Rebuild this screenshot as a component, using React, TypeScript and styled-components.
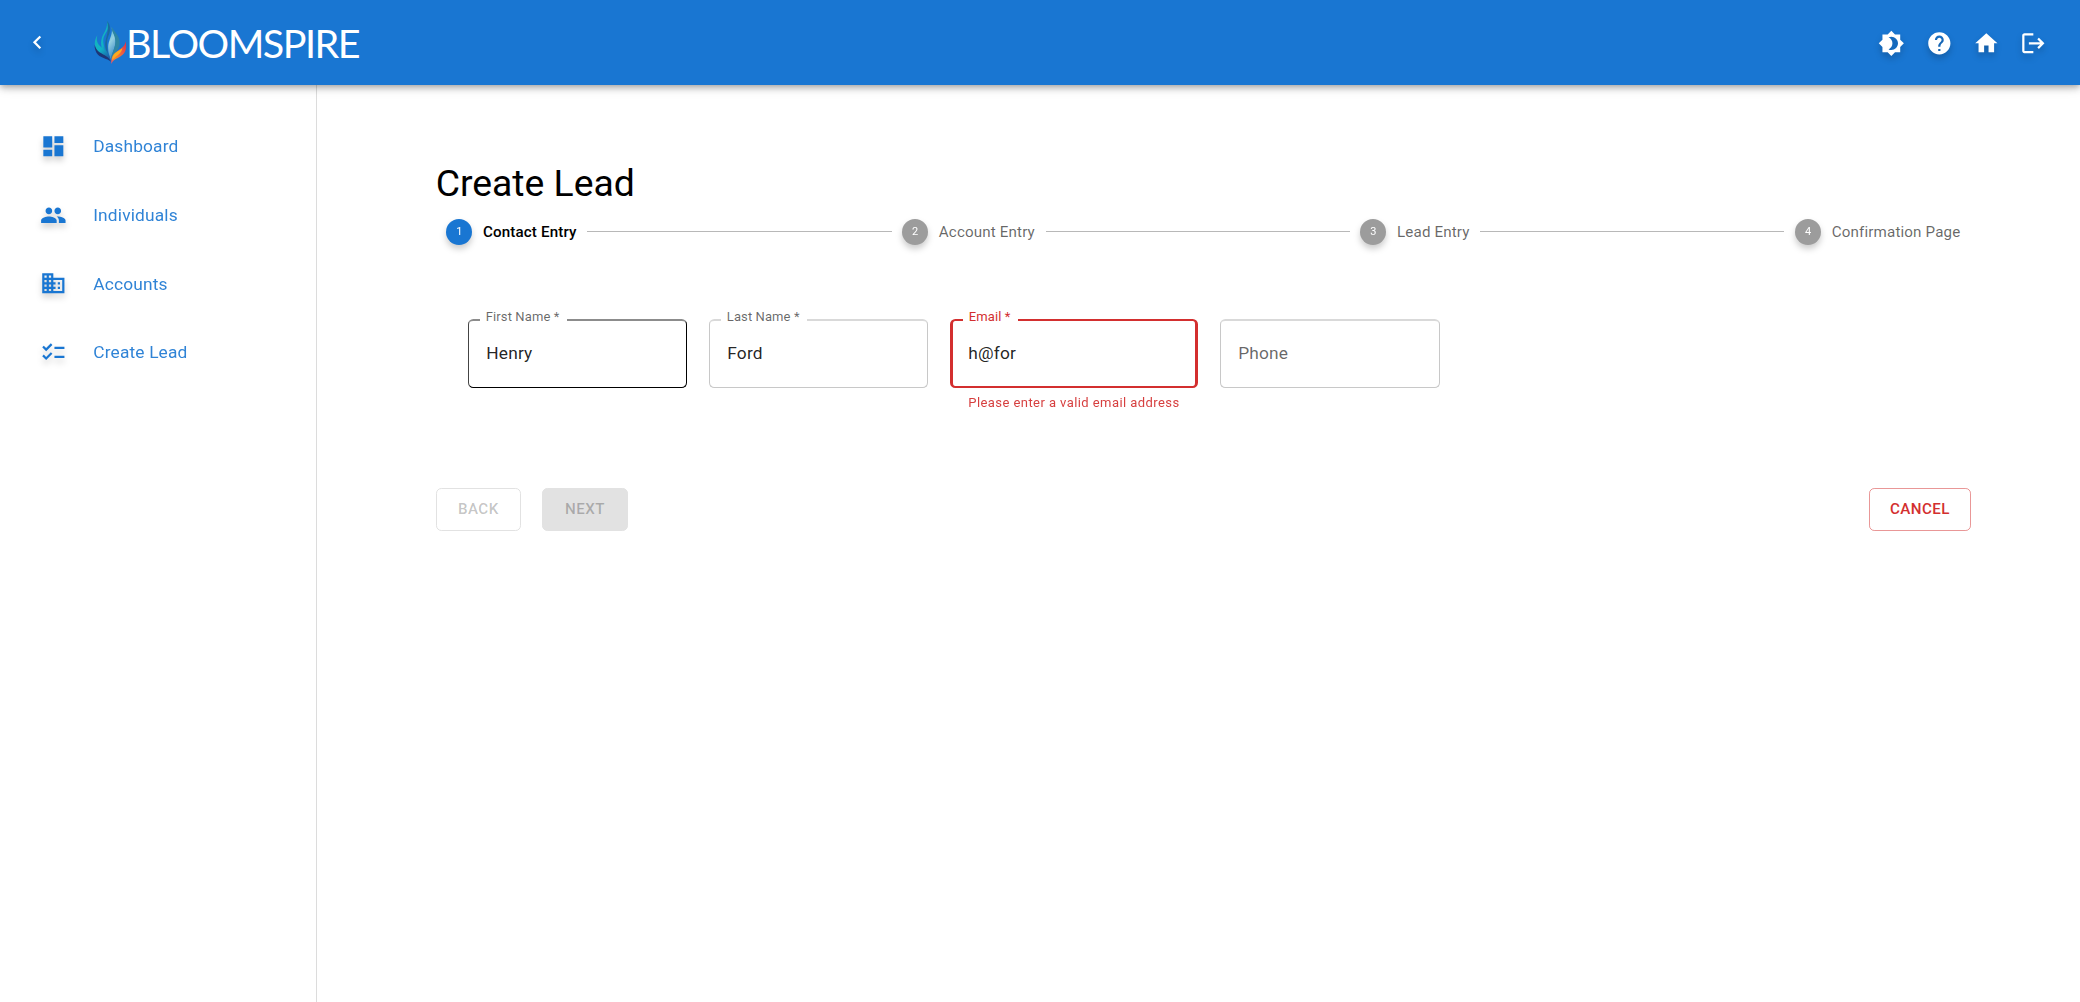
import React from "react";
import styled, { createGlobalStyle } from "styled-components";
import {
  MdBrightness4,
  MdChecklist,
  MdChevronLeft,
  MdDashboard,
  MdDomain,
  MdHelp,
  MdHome,
  MdLogout,
  MdPeople,
} from "react-icons/md";

const blue = "#1976d2";
const red = "#d32f2f";

const GlobalStyle = createGlobalStyle`
  *, *::before, *::after { box-sizing: border-box; }
  body {
    margin: 0;
    background: #fff;
    color: rgba(0, 0, 0, 0.87);
    font-family: Roboto, "Liberation Sans", sans-serif;
    font-size: 17.33px;
  }
`;

const Page = styled.div`
  display: flex;
  flex-direction: column;
  height: 1002px;
  overflow: hidden;
`;

const Header = styled.header`
  position: relative;
  z-index: 2;
  flex: none;
  display: flex;
  align-items: center;
  height: 85px;
  padding: 0 33.2px 0 23.5px;
  background: ${blue};
  color: #fff;
  box-shadow: 0 2.67px 5.33px -1.33px rgba(0, 0, 0, 0.2),
    0 5.33px 6.67px 0 rgba(0, 0, 0, 0.14), 0 1.33px 13.33px 0 rgba(0, 0, 0, 0.12);
`;

const Glyph = styled.span`
  display: flex;
  flex: none;
  font-size: 26.67px;
  filter: drop-shadow(0 4px 3px rgba(0, 0, 0, 0.2));
`;

const Brand = styled.div`
  display: flex;
  align-items: center;
  margin-left: 43.5px;
`;

const Flame = styled.svg`
  display: block;
  width: 33.3px;
  height: 43.3px;
`;

const Wordmark = styled.span`
  font-family: Lato, sans-serif;
  font-size: 39.5px;
  line-height: 44px;
  letter-spacing: -1.5px;
  margin: 0 0 0 -1px;
`;

const Actions = styled.div`
  display: flex;
  gap: 20.6px;
  margin: 1px 0 0 auto;
`;

const Body = styled.div`
  flex: 1;
  display: flex;
`;

const Sidebar = styled.nav`
  flex: none;
  display: flex;
  flex-direction: column;
  width: 317px;
  padding-top: 27px;
  border-right: 1px solid #dcdcdc;
`;

const NavItem = styled.a`
  display: flex;
  align-items: center;
  gap: 27px;
  height: 68.67px;
  padding-left: 39.6px;
  color: ${blue};
  letter-spacing: 0.16px;
`;

const NavLabel = styled.span`
  opacity: 0.9;
`;

const Main = styled.main`
  flex: 1;
  padding: 72px 109px 0 118.67px;
`;

const Title = styled.h1`
  margin: 0;
  color: #000;
  font-size: 37.33px;
  font-weight: 400;
  line-height: 52px;
  letter-spacing: 0;
`;

const Stepper = styled.div`
  display: flex;
  align-items: center;
  gap: 10.67px;
  height: 27px;
  margin-top: 9px;
  padding: 0 10.67px;
`;

const Step = styled.div<{ $active?: boolean }>`
  display: flex;
  align-items: center;
  gap: 10.67px;
  color: ${(p) => (p.$active ? "#000" : "rgba(0, 0, 0, 0.6)")};
  font-size: 15.17px;
  font-weight: ${(p) => (p.$active ? 500 : 400)};
  letter-spacing: 0.14px;
  white-space: nowrap;
`;

const StepNumber = styled.span<{ $active?: boolean }>`
  display: flex;
  align-items: center;
  justify-content: center;
  width: 26px;
  height: 26px;
  border-radius: 50%;
  background: ${(p) => (p.$active ? blue : "#9c9c9c")};
  color: #fff;
  font-size: 11px;
  font-weight: 400;
  letter-spacing: 0;
  filter: drop-shadow(0 4px 3px rgba(0, 0, 0, 0.2));
`;

const Connector = styled.span`
  flex: 1;
  height: 1px;
  background: #b8b8b8;
`;

const Fields = styled.div`
  display: flex;
  align-items: flex-start;
  gap: 21.33px;
  margin: 74px 0 0 32px;
  height: 169px;
`;

const Field = styled.div<{ $width: number }>`
  width: ${(p) => p.$width}px;
`;

type Tone = "normal" | "hover" | "error";
const borders: Record<Tone, string> = {
  normal: "border-width: 2px 1px 1px; border-color: #d9d9d9 #c8c8c8 #c8c8c8;",
  hover: "border-width: 2px 1px 1px; border-color: #8c8c8c #000 #000 #444;",
  error: `border-width: 2px 3px; border-color: ${red};`,
};

const Outline = styled.fieldset<{ $tone: Tone; $labelled: boolean }>`
  display: flex;
  align-items: center;
  min-width: 0;
  height: ${(p) => (p.$labelled ? 76 : 69)}px;
  margin: ${(p) => (p.$labelled ? -7 : 0)}px 0 0;
  padding: 0 ${(p) => (p.$tone === "error" ? 15.67 : 17.67)}px;
  border-style: solid;
  ${(p) => borders[p.$tone]}
  border-radius: 5.33px;
`;

const Legend = styled.legend<{ $error: boolean; $width: number }>`
  width: ${(p) => p.$width}px;
  height: 16px;
  margin-left: ${(p) => (p.$error ? -5.7 : -6.7)}px;
  padding-left: 6.2px;
  color: ${(p) => (p.$error ? red : "rgba(0, 0, 0, 0.6)")};
  font-size: 13px;
  line-height: 9px;
  letter-spacing: 0.1px;
  white-space: nowrap;
`;

const Value = styled.span<{ $placeholder?: boolean; $lift: number }>`
  margin-top: ${(p) => -p.$lift}px;
  color: ${(p) => (p.$placeholder ? "rgba(0, 0, 0, 0.6)" : "rgba(0, 0, 0, 0.87)")};
  letter-spacing: 0.16px;
  line-height: 25px;
`;

const Helper = styled.p`
  margin: 4px 18.67px 0;
  color: ${red};
  opacity: 0.92;
  font-size: 13px;
  line-height: 21px;
  letter-spacing: 0.43px;
  white-space: nowrap;
`;

const ButtonRow = styled.div`
  display: flex;
  gap: 21.33px;
`;

const buttonLooks = {
  outlined: `border-color: #e2e2e2; color: rgba(0, 0, 0, 0.24);`,
  filled: `border-color: #e2e2e2; background: #e2e2e2; color: rgba(0, 0, 0, 0.25);`,
  danger: `border-color: rgba(211, 47, 47, 0.5); color: ${red}; margin-left: auto;`,
};

const Button = styled.button<{ $look: keyof typeof buttonLooks; $width: number }>`
  width: ${(p) => p.$width}px;
  height: 42.67px;
  padding: 0;
  border: 1px solid;
  border-radius: 5.33px;
  background: none;
  font: 500 15.17px Roboto, sans-serif;
  letter-spacing: 0.43px;
  ${(p) => buttonLooks[p.$look]}
`;

const Logo = () => (
  <Flame viewBox="24 17 100 130" aria-hidden="true">
    <defs>
      <linearGradient id="teal" x1="0" y1="0" x2="0.5" y2="1">
        <stop offset="0" stopColor="#16b3b8" />
        <stop offset="0.6" stopColor="#10b2c6" />
        <stop offset="1" stopColor="#1a66ac" />
      </linearGradient>
      <linearGradient id="sky" x1="0" y1="0" x2="0.3" y2="1">
        <stop offset="0" stopColor="#4fb3cb" />
        <stop offset="0.5" stopColor="#93cfe2" />
        <stop offset="1" stopColor="#3f8fc8" />
      </linearGradient>
      <linearGradient id="ember" x1="1" y1="0" x2="0" y2="1">
        <stop offset="0" stopColor="#d92a4e" />
        <stop offset="0.4" stopColor="#ee5f40" />
        <stop offset="0.75" stopColor="#f58a2a" />
        <stop offset="1" stopColor="#e0457a" />
      </linearGradient>
    </defs>
    <path d="M63 16c9 21 0 31-7 43-8 14-6 35 16 71C50 110 41 92 47 70c4-18 19-28 16-54z" fill="url(#teal)" />
    <path d="M63 16c12 14 11 30 5 44-7 16-7 40 3 70-12-24-17-40-11-60 5-17 8-34 3-54z" fill="#1b6a9f" />
    <path d="M77 34c-2 12 12 22 12 42 0 20-9 30-15 56-9-24-9-42-4-56 5-14 10-26 7-42z" fill="url(#sky)" />
    <path d="M77 34c6 14 27 28 24 52-2 18-16 28-27 46 6-22 14-34 14-54 0-18-11-28-11-44z" fill="#2e86a3" />
    <path d="M34 60c-5 20 3 29 16 39 14 10 22 19 24 37-10-12-28-14-38-26-13-16-12-34-2-50z" fill="url(#teal)" />
    <path d="M26 88c5 19 17 24 29 31 10 6 16 10 20 20-14-11-28-10-39-21-7-7-11-20-10-30z" fill="#1d3577" />
    <path d="M119 78c5 24-2 38-17 46-11 7-20 8-26 22-2-18 4-28 15-36 14-11 26-15 28-32z" fill="url(#ember)" />
    <path d="M109 98c-2 17-15 20-31 37 1-14 8-22 17-27 6-4 10-6 14-10z" fill="#fbac1e" />
  </Flame>
);

const nav = [
  { label: "Dashboard", Icon: MdDashboard },
  { label: "Individuals", Icon: MdPeople },
  { label: "Accounts", Icon: MdDomain },
  { label: "Create Lead", Icon: MdChecklist },
];

const actions = [MdBrightness4, MdHelp, MdHome, MdLogout];
const steps = ["Contact Entry", "Account Entry", "Lead Entry", "Confirmation Page"];

type FieldData = {
  width: number;
  tone: Tone;
  label?: string;
  legend?: number;
  value: string;
  helper?: string;
};

const fields: FieldData[] = [
  { width: 219.67, tone: "hover", label: "First Name *", legend: 87.5, value: "Henry" },
  { width: 219.67, tone: "normal", label: "Last Name *", legend: 86, value: "Ford" },
  { width: 248.67, tone: "error", label: "Email *", legend: 55, value: "h@for", helper: "Please enter a valid email address" },
  { width: 220, tone: "normal", value: "Phone" },
];

export default function App() {
  return (
    <Page>
      <GlobalStyle />
      <Header>
        <Glyph><MdChevronLeft /></Glyph>
        <Brand>
          <Logo />
          <Wordmark>BLOOMSPIRE</Wordmark>
        </Brand>
        <Actions>
          {actions.map((Icon, i) => (
            <Glyph key={i}><Icon /></Glyph>
          ))}
        </Actions>
      </Header>
      <Body>
        <Sidebar>
          {nav.map(({ label, Icon }) => (
            <NavItem key={label}>
              <Glyph><Icon /></Glyph>
              <NavLabel>{label}</NavLabel>
            </NavItem>
          ))}
        </Sidebar>
        <Main>
          <Title>Create Lead</Title>
          <Stepper>
            {steps.map((label, i) => (
              <React.Fragment key={label}>
                {i > 0 && <Connector />}
                <Step $active={i === 0}>
                  <StepNumber $active={i === 0}>{i + 1}</StepNumber>
                  {label}
                </Step>
              </React.Fragment>
            ))}
          </Stepper>
          <Fields>
            {fields.map((f) => (
              <Field key={f.value} $width={f.width}>
                <Outline $tone={f.tone} $labelled={!!f.label}>
                  {f.label && (
                    <Legend $error={f.tone === "error"} $width={f.legend ?? 0}>{f.label}</Legend>
                  )}
                  <Value $placeholder={!f.label} $lift={!f.label ? 1 : f.tone === "error" ? 7 : 8}>
                    {f.value}
                  </Value>
                </Outline>
                {f.helper && <Helper>{f.helper}</Helper>}
              </Field>
            ))}
          </Fields>
          <ButtonRow>
            <Button $look="outlined" $width={85.33}>BACK</Button>
            <Button $look="filled" $width={85.33}>NEXT</Button>
            <Button $look="danger" $width={102}>CANCEL</Button>
          </ButtonRow>
        </Main>
      </Body>
    </Page>
  );
}
